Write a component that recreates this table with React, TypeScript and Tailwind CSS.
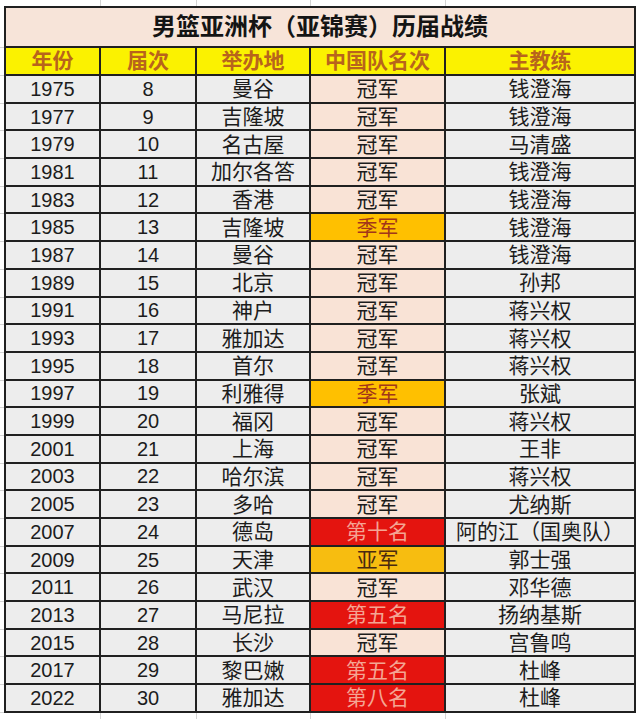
import React from "react";

type Rank = "gold" | "bronze" | "silver" | "red";

interface IRow {
  year: string;
  edition: string;
  host: string;
  rank: string;
  kind: Rank;
  coach: string;
}

const rows: IRow[] = [
  { year: "1975", edition: "8", host: "曼谷", rank: "冠军", kind: "gold", coach: "钱澄海" },
  { year: "1977", edition: "9", host: "吉隆坡", rank: "冠军", kind: "gold", coach: "钱澄海" },
  { year: "1979", edition: "10", host: "名古屋", rank: "冠军", kind: "gold", coach: "马清盛" },
  { year: "1981", edition: "11", host: "加尔各答", rank: "冠军", kind: "gold", coach: "钱澄海" },
  { year: "1983", edition: "12", host: "香港", rank: "冠军", kind: "gold", coach: "钱澄海" },
  { year: "1985", edition: "13", host: "吉隆坡", rank: "季军", kind: "bronze", coach: "钱澄海" },
  { year: "1987", edition: "14", host: "曼谷", rank: "冠军", kind: "gold", coach: "钱澄海" },
  { year: "1989", edition: "15", host: "北京", rank: "冠军", kind: "gold", coach: "孙邦" },
  { year: "1991", edition: "16", host: "神户", rank: "冠军", kind: "gold", coach: "蒋兴权" },
  { year: "1993", edition: "17", host: "雅加达", rank: "冠军", kind: "gold", coach: "蒋兴权" },
  { year: "1995", edition: "18", host: "首尔", rank: "冠军", kind: "gold", coach: "蒋兴权" },
  { year: "1997", edition: "19", host: "利雅得", rank: "季军", kind: "bronze", coach: "张斌" },
  { year: "1999", edition: "20", host: "福冈", rank: "冠军", kind: "gold", coach: "蒋兴权" },
  { year: "2001", edition: "21", host: "上海", rank: "冠军", kind: "gold", coach: "王非" },
  { year: "2003", edition: "22", host: "哈尔滨", rank: "冠军", kind: "gold", coach: "蒋兴权" },
  { year: "2005", edition: "23", host: "多哈", rank: "冠军", kind: "gold", coach: "尤纳斯" },
  { year: "2007", edition: "24", host: "德岛", rank: "第十名", kind: "red", coach: "阿的江（国奥队）" },
  { year: "2009", edition: "25", host: "天津", rank: "亚军", kind: "silver", coach: "郭士强" },
  { year: "2011", edition: "26", host: "武汉", rank: "冠军", kind: "gold", coach: "邓华德" },
  { year: "2013", edition: "27", host: "马尼拉", rank: "第五名", kind: "red", coach: "扬纳基斯" },
  { year: "2015", edition: "28", host: "长沙", rank: "冠军", kind: "gold", coach: "宫鲁鸣" },
  { year: "2017", edition: "29", host: "黎巴嫩", rank: "第五名", kind: "red", coach: "杜峰" },
  { year: "2022", edition: "30", host: "雅加达", rank: "第八名", kind: "red", coach: "杜峰" },
];

const rankCell: Record<Rank, string> = {
  gold: "bg-[#f9e3d6] text-[#1c1c1c]",
  bronze: "bg-[#ffc000] text-[#a2361a]",
  silver: "bg-[#f7bd10] text-[#4a2a10]",
  red: "bg-[#e4140f] text-[#f4a594]",
};

const cell = "flex items-center justify-center h-[25.7px] leading-none";

export default function App() {
  return (
    <div
      className="w-[640px] h-[719px] bg-white overflow-hidden text-[20px] text-[#1c1c1c]"
      style={{ fontFamily: '"Liberation Sans", "Noto Sans CJK SC", sans-serif' }}
    >
      {/* sheet gridlines above the table */}
      <div className="flex h-[6px] pl-[4px]">
        <div className="w-[97px] border-r border-[#d4d4d4]" />
        <div className="w-[96px] border-r border-[#d4d4d4]" />
        <div className="w-[114px] border-r border-[#d4d4d4]" />
        <div className="w-[135px] border-r border-[#d4d4d4]" />
        <div className="w-[190px]" />
      </div>

      <div className="flex">
        <div className="w-[4px] flex flex-col">
          <div className="h-[42px] border-b border-[#d4d4d4]" />
          <div className="h-[28px] border-b border-[#d4d4d4]" />
          {rows.map((r) => (
            <div key={r.year} className="h-[27.7px] border-b border-[#d4d4d4]" />
          ))}
        </div>

        <div className="grid grid-cols-[93px_94px_112px_133px_188px] gap-[2px] p-[2px] bg-[#202020]">
          <div className="col-span-5 h-[38px] flex items-center justify-center bg-[#f7e4d9] text-[24px] font-bold text-[#141414]">
            男篮亚洲杯（亚锦赛）历届战绩
          </div>

          {["年份", "届次", "举办地", "中国队名次", "主教练"].map((h) => (
            <div
              key={h}
              className="h-[26px] flex items-center justify-center bg-[#fbf200] text-[21px] font-bold text-[#b8641c]"
            >
              {h}
            </div>
          ))}

          {rows.map((r) => (
            <React.Fragment key={r.year}>
              <div className={`${cell} bg-[#ededed]`}>{r.year}</div>
              <div className={`${cell} bg-[#ededed]`}>{r.edition}</div>
              <div className={`${cell} bg-[#ededed] text-[21px]`}>{r.host}</div>
              <div className={`${cell} ${rankCell[r.kind]} text-[21px]`}>{r.rank}</div>
              <div className={`${cell} bg-[#ededed] text-[21px]`}>{r.coach}</div>
            </React.Fragment>
          ))}
        </div>

        <div className="flex-1" />
      </div>

      {/* sheet gridlines below the table */}
      <div className="flex h-[8px] pl-[4px]">
        <div className="w-[97px] border-r border-[#d4d4d4]" />
        <div className="w-[96px] border-r border-[#d4d4d4]" />
        <div className="w-[114px] border-r border-[#d4d4d4]" />
        <div className="w-[135px] border-r border-[#d4d4d4]" />
        <div className="w-[190px]" />
      </div>
    </div>
  );
}
